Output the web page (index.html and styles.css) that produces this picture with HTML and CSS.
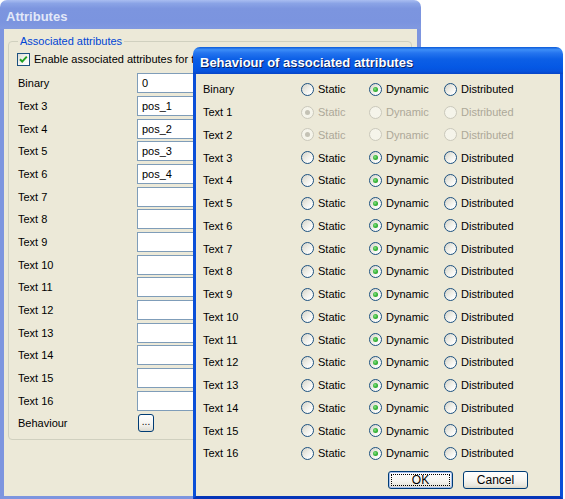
FILE: index.html
```html
<!DOCTYPE html>
<html>
<head>
<meta charset="utf-8">
<title>Attributes</title>
<link rel="stylesheet" href="styles.css">
</head>
<body>
<div class="desktop">
  <div class="window back">
    <div class="titlebar inactive"><span class="title">Attributes</span></div>
    <div class="client back-client">
      <fieldset class="group">
        <legend>Associated attributes</legend>
        <div class="check-row">
          <span class="checkbox"><svg width="11" height="11" viewBox="0 0 11 11"><path d="M2 5.2 L4.2 7.6 L8.8 2.6" fill="none" stroke="#21a121" stroke-width="2"/></svg></span>
          <span class="check-text">Enable associated attributes for this layer</span>
        </div>
        <div class="form">
          <span class="lbl">Binary</span><span class="field">0</span>
          <span class="lbl">Text 3</span><span class="field">pos_1</span>
          <span class="lbl">Text 4</span><span class="field">pos_2</span>
          <span class="lbl">Text 5</span><span class="field">pos_3</span>
          <span class="lbl">Text 6</span><span class="field">pos_4</span>
          <span class="lbl">Text 7</span><span class="field"></span>
          <span class="lbl">Text 8</span><span class="field"></span>
          <span class="lbl">Text 9</span><span class="field"></span>
          <span class="lbl">Text 10</span><span class="field"></span>
          <span class="lbl">Text 11</span><span class="field"></span>
          <span class="lbl">Text 12</span><span class="field"></span>
          <span class="lbl">Text 13</span><span class="field"></span>
          <span class="lbl">Text 14</span><span class="field"></span>
          <span class="lbl">Text 15</span><span class="field"></span>
          <span class="lbl">Text 16</span><span class="field"></span>
          <span class="lbl">Behaviour</span><span class="cell"><span class="btn-small">...</span></span>
        </div>
      </fieldset>
    </div>
  </div>

  <div class="window dialog">
    <div class="titlebar active"><span class="title">Behaviour of associated attributes</span></div>
    <div class="client dialog-client">
      <div class="grid">
        <span class="lbl">Binary</span>
        <span class="opt"><span class="radio"></span>Static</span>
        <span class="opt"><span class="radio on"></span>Dynamic</span>
        <span class="opt"><span class="radio"></span>Distributed</span>

        <span class="lbl">Text 1</span>
        <span class="opt dis"><span class="radio on"></span>Static</span>
        <span class="opt dis"><span class="radio"></span>Dynamic</span>
        <span class="opt dis"><span class="radio"></span>Distributed</span>

        <span class="lbl">Text 2</span>
        <span class="opt dis"><span class="radio on"></span>Static</span>
        <span class="opt dis"><span class="radio"></span>Dynamic</span>
        <span class="opt dis"><span class="radio"></span>Distributed</span>

        <span class="lbl">Text 3</span>
        <span class="opt"><span class="radio"></span>Static</span>
        <span class="opt"><span class="radio on"></span>Dynamic</span>
        <span class="opt"><span class="radio"></span>Distributed</span>

        <span class="lbl">Text 4</span>
        <span class="opt"><span class="radio"></span>Static</span>
        <span class="opt"><span class="radio on"></span>Dynamic</span>
        <span class="opt"><span class="radio"></span>Distributed</span>

        <span class="lbl">Text 5</span>
        <span class="opt"><span class="radio"></span>Static</span>
        <span class="opt"><span class="radio on"></span>Dynamic</span>
        <span class="opt"><span class="radio"></span>Distributed</span>

        <span class="lbl">Text 6</span>
        <span class="opt"><span class="radio"></span>Static</span>
        <span class="opt"><span class="radio on"></span>Dynamic</span>
        <span class="opt"><span class="radio"></span>Distributed</span>

        <span class="lbl">Text 7</span>
        <span class="opt"><span class="radio"></span>Static</span>
        <span class="opt"><span class="radio on"></span>Dynamic</span>
        <span class="opt"><span class="radio"></span>Distributed</span>

        <span class="lbl">Text 8</span>
        <span class="opt"><span class="radio"></span>Static</span>
        <span class="opt"><span class="radio on"></span>Dynamic</span>
        <span class="opt"><span class="radio"></span>Distributed</span>

        <span class="lbl">Text 9</span>
        <span class="opt"><span class="radio"></span>Static</span>
        <span class="opt"><span class="radio on"></span>Dynamic</span>
        <span class="opt"><span class="radio"></span>Distributed</span>

        <span class="lbl">Text 10</span>
        <span class="opt"><span class="radio"></span>Static</span>
        <span class="opt"><span class="radio on"></span>Dynamic</span>
        <span class="opt"><span class="radio"></span>Distributed</span>

        <span class="lbl">Text 11</span>
        <span class="opt"><span class="radio"></span>Static</span>
        <span class="opt"><span class="radio on"></span>Dynamic</span>
        <span class="opt"><span class="radio"></span>Distributed</span>

        <span class="lbl">Text 12</span>
        <span class="opt"><span class="radio"></span>Static</span>
        <span class="opt"><span class="radio on"></span>Dynamic</span>
        <span class="opt"><span class="radio"></span>Distributed</span>

        <span class="lbl">Text 13</span>
        <span class="opt"><span class="radio"></span>Static</span>
        <span class="opt"><span class="radio on"></span>Dynamic</span>
        <span class="opt"><span class="radio"></span>Distributed</span>

        <span class="lbl">Text 14</span>
        <span class="opt"><span class="radio"></span>Static</span>
        <span class="opt"><span class="radio on"></span>Dynamic</span>
        <span class="opt"><span class="radio"></span>Distributed</span>

        <span class="lbl">Text 15</span>
        <span class="opt"><span class="radio"></span>Static</span>
        <span class="opt"><span class="radio on"></span>Dynamic</span>
        <span class="opt"><span class="radio"></span>Distributed</span>

        <span class="lbl">Text 16</span>
        <span class="opt"><span class="radio"></span>Static</span>
        <span class="opt"><span class="radio on"></span>Dynamic</span>
        <span class="opt"><span class="radio"></span>Distributed</span>
      </div>
      <div class="buttons">
        <span class="btn default">OK</span>
        <span class="btn">Cancel</span>
      </div>
    </div>
  </div>
</div>
</body>
</html>
```

FILE: styles.css
```css
html, body {
  margin: 0;
  padding: 0;
  background: #ffffff;
}
body {
  font-family: "Liberation Sans", Arial, sans-serif;
  font-size: 11px;
  color: #000;
}
.desktop {
  position: relative;
  width: 565px;
  height: 499px;
  overflow: hidden;
}

/* ---------- windows ---------- */
.window {
  position: absolute;
  display: flex;
  flex-direction: column;
}
.back {
  left: 0;
  top: 0;
  width: 421px;
  height: 499px;
}
.dialog {
  left: 193px;
  top: 47px;
  width: 370px;
  height: 452px;
}
.titlebar {
  flex: none;
  display: flex;
  align-items: center;
  border-radius: 7px 7px 0 0;
  box-sizing: border-box;
}
.title {
  color: #fff;
  font-weight: bold;
  font-size: 13px;
  line-height: 15px;
  white-space: nowrap;
}
.inactive {
  height: 29px;
  padding: 3px 0 0 6px;
  background: linear-gradient(#a9bdf1 0%, #8aa3e6 12%, #7c95df 30%, #7b94df 75%, #8199e0 100%);
}
.inactive .title {
  color: #e2e8f8;
}
.active {
  height: 27px;
  padding: 3px 0 0 7px;
  background: linear-gradient(#0a5ad8 0%, #3d8ef7 10%, #2575ef 22%, #0c5fe6 45%, #0558e4 75%, #0652dd 90%, #0745c6 100%);
}
.active .title {
  text-shadow: 1px 1px 0 #0a1f60;
}
.client {
  flex: 1;
  background: #ece9d8;
  box-sizing: border-box;
}
.back-client {
  border: solid #7d95df;
  border-width: 0 4px 3px 4px;
}
.dialog-client {
  border: solid #0a4fd8;
  border-width: 0 3px 3px 3px;
  border-bottom-color: #0535b8;
  padding: 4px 0 0 7px;
  display: flex;
  flex-direction: column;
}

/* ---------- back window content ---------- */
.group {
  margin: 6px 5px 0 4px;
  padding: 0 8px 4px 9px;
  border: 1px solid #d0d0bf;
  border-radius: 4px;
  min-width: 0;
}
.group legend {
  padding: 0 2px;
  margin-left: 0;
  color: #0046d5;
  line-height: 13px;
}
.check-row {
  display: flex;
  align-items: center;
  height: 20px;
  margin-top: 1px;
  margin-left: -1px;
  white-space: nowrap;
}
.checkbox {
  width: 13px;
  height: 13px;
  box-sizing: border-box;
  border: 1px solid #1c5180;
  background: linear-gradient(135deg, #dcdcd5 0%, #f4f4f0 50%, #ffffff 100%);
  display: flex;
  align-items: center;
  justify-content: center;
  flex: none;
}
.checkbox svg {
  display: block;
}
.check-text {
  margin-left: 4px;
}
.form {
  margin-top: 3px;
  display: grid;
  grid-template-columns: 119px 1fr;
  grid-auto-rows: 22.67px;
  align-items: center;
}
.lbl {
  white-space: nowrap;
}
.field {
  height: 20px;
  box-sizing: border-box;
  border: 1px solid #7f9db9;
  background: #fff;
  padding-left: 4px;
  line-height: 18px;
}
.cell {
  display: flex;
  align-items: center;
}
.btn-small {
  margin-left: 1px;
  width: 16px;
  height: 18px;
  box-sizing: border-box;
  border: 1px solid #003c74;
  border-radius: 3px;
  background: linear-gradient(#ffffff 0%, #f4f3ee 60%, #dcdad0 100%);
  display: flex;
  align-items: flex-end;
  justify-content: center;
  line-height: 12px;
  font-size: 10px;
  padding-bottom: 3px;
}

/* ---------- dialog content ---------- */
.grid {
  display: grid;
  grid-template-columns: 98px 68px 75px 1fr;
  grid-auto-rows: 22.75px;
  align-items: center;
}
.opt {
  display: flex;
  align-items: center;
  gap: 4px;
  white-space: nowrap;
}
.radio {
  position: relative;
  width: 13px;
  height: 13px;
  box-sizing: border-box;
  border-radius: 50%;
  border: 1px solid #1c5180;
  background: linear-gradient(135deg, #d2d1c8 0%, #eeede6 45%, #ffffff 85%);
  flex: none;
}
.radio.on::after {
  content: "";
  position: absolute;
  left: 3px;
  top: 3px;
  width: 5px;
  height: 5px;
  border-radius: 50%;
  background: radial-gradient(circle at 40% 40%, #8ee08e 0%, #3cb83c 45%, #1a961a 100%);
}
.opt.dis {
  color: #aca899;
}
.opt.dis .radio {
  border-color: #cac8bb;
  background: #f5f4ea;
}
.opt.dis .radio.on::after {
  background: #c4c2b5;
}

.buttons {
  display: flex;
  justify-content: flex-end;
  gap: 10px;
  margin-top: 6px;
  padding-right: 32px;
}
.btn {
  position: relative;
  width: 65px;
  height: 18px;
  box-sizing: border-box;
  border: 1px solid #003c74;
  border-radius: 3px;
  background: linear-gradient(#ffffff 0%, #f7f6f1 50%, #e9e7de 85%, #d8d5c8 100%);
  display: flex;
  align-items: center;
  justify-content: center;
  font-size: 12px;
}
.btn.default {
  box-shadow: inset 0 0 0 1px #a8c2f0;
}
.btn.default::after {
  content: "";
  position: absolute;
  left: 2px;
  top: 2px;
  right: 2px;
  bottom: 2px;
  border: 1px dotted #000;
}
```
